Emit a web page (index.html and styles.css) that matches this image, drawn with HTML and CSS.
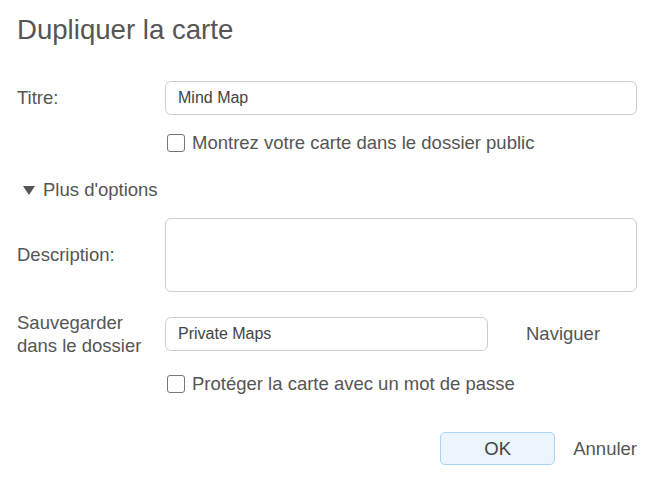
FILE: index.html
```html
<!DOCTYPE html>
<html lang="fr">
<head>
  <meta charset="UTF-8">
  <title>Dupliquer la carte</title>
  <link rel="stylesheet" href="styles.css">
</head>
<body>
  <div class="dialog">
    <h1>Dupliquer la carte</h1>

    <div class="field field-title">
      <label for="title">Titre:</label>
      <input type="text" id="title" value="Mind Map">
    </div>

    <label class="check check-public">
      <input type="checkbox">
      <span>Montrez votre carte dans le dossier public</span>
    </label>

    <div class="more">
      <span class="arrow"></span>
      <span>Plus d'options</span>
    </div>

    <div class="field field-desc">
      <label for="desc">Description:</label>
      <textarea id="desc"></textarea>
    </div>

    <div class="field field-folder">
      <label for="folder">Sauvegarder<br>dans le dossier</label>
      <input type="text" id="folder" value="Private Maps">
      <span class="browse">Naviguer</span>
    </div>

    <label class="check check-password">
      <input type="checkbox">
      <span>Protéger la carte avec un mot de passe</span>
    </label>

    <div class="actions">
      <button class="btn-ok">OK</button>
      <span class="cancel">Annuler</span>
    </div>
  </div>
</body>
</html>
```

FILE: styles.css
```css
body {
  margin: 0;
  font-family: "Liberation Sans", Arial, sans-serif;
  color: #555;
  background: #fff;
}
.dialog {
  padding: 14px 13px 0 17px;
}
h1 {
  margin: 0;
  font-size: 27.6px;
  font-weight: normal;
  line-height: 31px;
}
.field {
  display: grid;
  grid-template-columns: 148px 1fr;
  align-items: center;
  font-size: 18.5px;
}
.field-title {
  margin-top: 36px;
}
.field-desc {
  margin-top: 17px;
}
.field-folder {
  margin-top: 19px;
  grid-template-columns: 148px 323px auto;
}
.field-folder label {
  line-height: 23px;
}
input[type="text"], textarea {
  box-sizing: border-box;
  width: 100%;
  height: 34px;
  margin: 0;
  padding: 0 12px;
  border: 1px solid #ccc;
  border-radius: 6px;
  font-family: inherit;
  font-size: 16px;
  color: #444;
  outline: none;
}
textarea {
  height: 74px;
  resize: none;
  display: block;
}
.browse {
  margin-left: 38px;
}
.check {
  display: flex;
  align-items: center;
  height: 18px;
  padding-left: 150px;
  font-size: 18.5px;
}
.check input {
  appearance: none;
  box-sizing: border-box;
  width: 18px;
  height: 18px;
  margin: 0 7px 0 0;
  border: 1px solid #777;
  border-radius: 3px;
  background: #fff;
}
.check-public {
  margin-top: 19px;
}
.check-password {
  margin-top: 18px;
}
.more {
  display: flex;
  align-items: center;
  height: 22px;
  margin-top: 27px;
  padding-left: 6px;
  font-size: 18.5px;
}
.arrow {
  width: 0;
  height: 0;
  margin-right: 8px;
  border-left: 6.5px solid transparent;
  border-right: 6.5px solid transparent;
  border-top: 9px solid #555;
}
.actions {
  display: flex;
  justify-content: flex-end;
  align-items: center;
  margin-top: 39px;
  font-size: 18.5px;
}
.btn-ok {
  width: 115px;
  height: 33px;
  padding: 0;
  border: 1px solid #a9d3f2;
  border-radius: 5px;
  background: #ebf5fd;
  font-family: inherit;
  font-size: 18.5px;
  color: #444;
}
.cancel {
  margin-left: 18px;
}
```
